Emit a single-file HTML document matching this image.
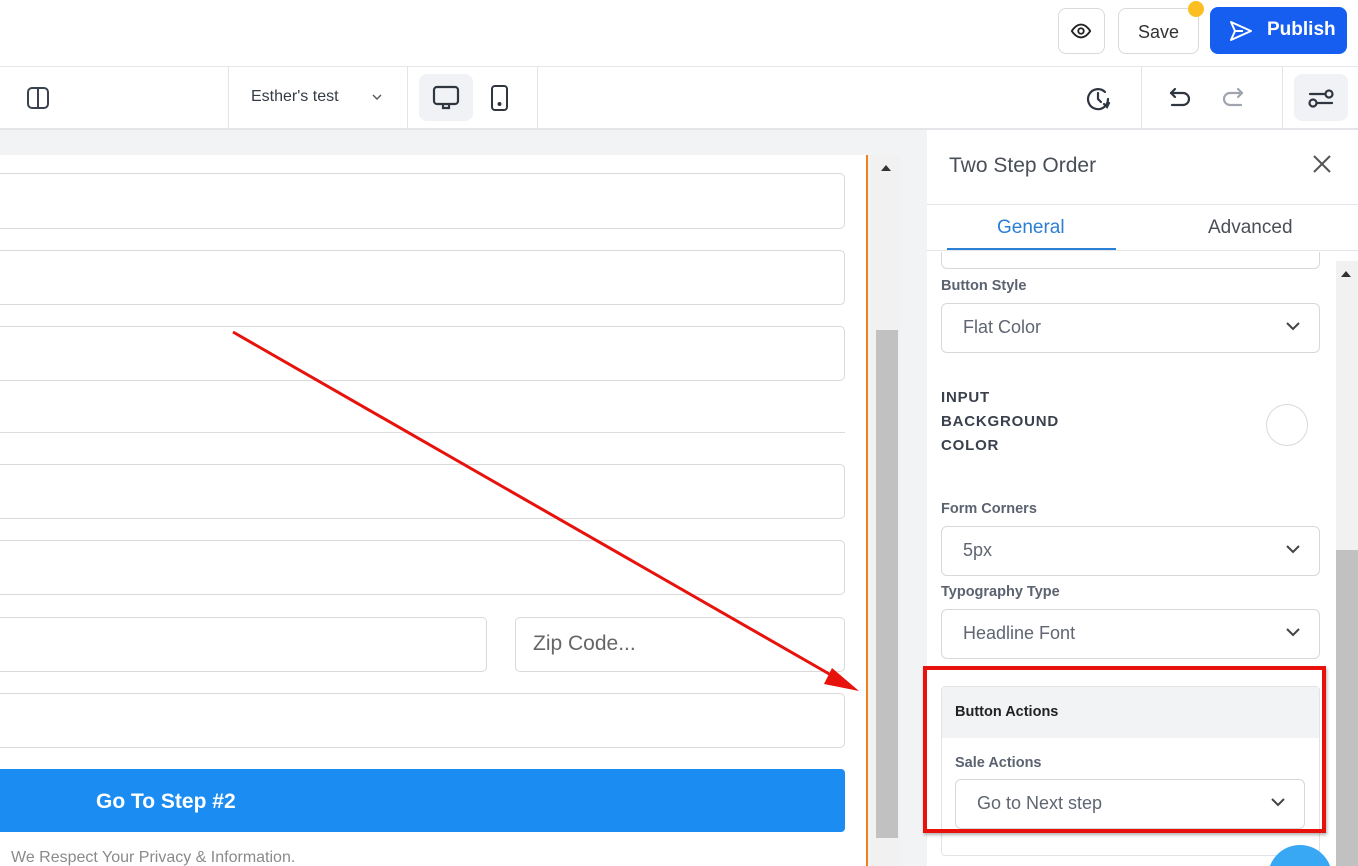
<!DOCTYPE html>
<html style="overflow:hidden;height:866px"><head><meta charset="utf-8"><style>
*{box-sizing:border-box;margin:0;padding:0}
body{width:1358px;height:866px;overflow:hidden;background:#fff;font-family:"Liberation Sans",sans-serif}
#w{position:relative;width:1358px;height:866px;overflow:hidden}
.a{position:absolute}
.inp{position:absolute;left:-10px;width:855px;border:1px solid #d9d9d9;border-radius:5px;background:#fff}
.lbl{position:absolute;left:941px;font-size:14.5px;font-weight:bold;color:#5b6270}
.sel{position:absolute;left:941px;width:379px;height:50px;border:1px solid #d6d8dc;border-radius:6px;background:#fff;font-size:18px;color:#5f6672;padding:13px 0 0 21px}
.chev{position:absolute;right:18px;top:16px}
.vl{position:absolute;top:67px;width:1px;height:61px;background:#e3e5e8}
</style></head><body><div id="w">
<div class="a" style="left:0;top:66px;width:1358px;height:1px;background:#e5e7eb"></div>
<div class="a" style="left:1058px;top:8px;width:47px;height:46px;border:1px solid #d8dadd;border-radius:8px"></div>
<svg class="a" style="left:1070px;top:20px" width="22" height="22" viewBox="0 0 24 24" fill="none" stroke="#222" stroke-width="2"><path d="M2 12s4-7 10-7 10 7 10 7-4 7-10 7S2 12 2 12z"/><circle cx="12" cy="12" r="3"/></svg>
<div class="a" style="left:1118px;top:8px;width:81px;height:46px;border:1px solid #d8dadd;border-radius:8px;font-size:18px;color:#333;text-align:center;line-height:46px">Save</div>
<div class="a" style="left:1188px;top:1px;width:16px;height:16px;border-radius:50%;background:#fbbf24"></div>
<div class="a" style="left:1210px;top:7px;width:137px;height:47px;background:#155eef;border-radius:8px;color:#fff;font-weight:bold;font-size:19px;line-height:46px;padding-left:57px">Publish</div>
<svg class="a" style="left:1228px;top:19px" width="26" height="24" viewBox="0 0 26 24" fill="none" stroke="#fff" stroke-width="2" stroke-linejoin="round"><path d="M3 3l20 9-20 9 4-9z M7 12h8"/></svg>
<div class="a" style="left:0;top:128px;width:1358px;height:2px;background:#e3e5e8"></div>
<div class="vl" style="left:228px"></div><div class="vl" style="left:407px"></div><div class="vl" style="left:537px"></div><div class="vl" style="left:1141px"></div><div class="vl" style="left:1282px"></div>
<svg class="a" style="left:26px;top:86px" width="24" height="24" viewBox="0 0 24 24" fill="none" stroke="#3a4250" stroke-width="2"><rect x="2" y="2" width="20" height="20" rx="4"/><path d="M12 2v20"/></svg>
<div class="a" style="left:251px;top:88px;font-size:16px;color:#353b45">Esther's test</div>
<svg class="a" style="left:371px;top:92px" width="12" height="10" viewBox="0 0 12 10" fill="none" stroke="#555" stroke-width="1.4"><path d="M2 3l4 4 4-4"/></svg>
<div class="a" style="left:419px;top:74px;width:54px;height:47px;background:#f1f2f5;border-radius:8px"></div>
<svg class="a" style="left:432px;top:84px" width="28" height="28" viewBox="0 0 28 28" fill="none" stroke="#2f3640" stroke-width="2.2"><rect x="2" y="3" width="24" height="17" rx="3"/><path d="M11 20v4h6v-4"/></svg>
<svg class="a" style="left:489px;top:84px" width="22" height="28" viewBox="0 0 22 28" fill="none" stroke="#2f3640" stroke-width="2"><rect x="3" y="2" width="15" height="24" rx="3"/><circle cx="10.5" cy="20" r="1" fill="#2f3640"/></svg>
<svg class="a" style="left:1085px;top:85px" width="28" height="28" viewBox="0 0 28 28" fill="none" stroke="#2f3640" stroke-width="2.2" stroke-linecap="round"><path d="M23 14a10 10 0 1 1-3-7"/><path d="M13 8v6l3 3"/><path d="M24 18l-2 4-3-3"/></svg>
<svg class="a" style="left:1167px;top:85px" width="26" height="26" viewBox="0 0 26 26" fill="none" stroke="#2f3640" stroke-width="2.2" stroke-linecap="round" stroke-linejoin="round"><path d="M8 4L4 8l4 4"/><path d="M4 8h12a6 6 0 0 1 0 12H5"/></svg>
<svg class="a" style="left:1220px;top:85px" width="26" height="26" viewBox="0 0 26 26" fill="none" stroke="#a0a5ad" stroke-width="2.2" stroke-linecap="round" stroke-linejoin="round"><path d="M18 4l4 4-4 4"/><path d="M22 8H10a6 6 0 0 0 0 12h11"/></svg>
<div class="a" style="left:1294px;top:74px;width:54px;height:47px;background:#f1f2f5;border-radius:8px"></div>
<svg class="a" style="left:1307px;top:85px" width="28" height="26" viewBox="0 0 28 26" fill="none" stroke="#2f3640" stroke-width="2.2" stroke-linecap="round"><path d="M3 9h15"/><circle cx="22" cy="9" r="3.5"/><path d="M25 18H10"/><circle cx="6" cy="18" r="3.5"/></svg>
<div class="a" style="left:0;top:130px;width:927px;height:736px;background:#f2f3f5"></div>
<div class="a" style="left:0;top:155px;width:866px;height:711px;background:#fff"></div>
<div class="a" style="left:866px;top:155px;width:2px;height:711px;background:#f07f1e"></div>
<div class="a" style="left:870px;top:155px;width:30px;height:711px;background:#f1f1f1"></div>
<div class="a" style="left:876px;top:330px;width:22px;height:508px;background:#c1c1c1"></div>
<svg class="a" style="left:880px;top:164px" width="12" height="8"><path d="M1 7l5-6 5 6z" fill="#333"/></svg>
<div class="inp" style="top:173px;height:56px"></div>
<div class="inp" style="top:250px;height:55px"></div>
<div class="inp" style="top:326px;height:55px"></div>
<div class="a" style="left:0;top:432px;width:845px;height:1px;background:#ddd"></div>
<div class="inp" style="top:464px;height:55px"></div>
<div class="inp" style="top:540px;height:55px"></div>
<div class="inp" style="top:617px;height:55px;width:497px"></div>
<div class="inp" style="top:617px;height:55px;left:515px;width:330px;font-size:21px;color:#666;padding:14px 0 0 17px">Zip Code...</div>
<div class="inp" style="top:693px;height:55px"></div>
<div class="a" style="left:0;top:769px;width:845px;height:63px;background:#1b8cf2;border-radius:0 4px 4px 0;color:#fff;font-weight:bold;font-size:21px;line-height:66px;padding-left:96px">Go To Step #2</div>
<div class="a" style="left:11px;top:849px;font-size:16px;color:#8a8a8a">We Respect Your Privacy &amp; Information.</div>
<svg class="a" style="left:0;top:0" width="900" height="866"><line x1="233" y1="332" x2="838" y2="679" stroke="#e8120c" stroke-width="3"/><path d="M859 691L832 668 824 684z" fill="#e8120c"/></svg>
<div class="a" style="left:927px;top:130px;width:431px;height:736px;background:#fff"></div>
<div class="a" style="left:949px;top:154px;font-size:21px;color:#4a4f57">Two Step Order</div>
<svg class="a" style="left:1313px;top:155px" width="18" height="18" fill="none" stroke="#555" stroke-width="2"><path d="M1 1l16 16M17 1L1 17"/></svg>
<div class="a" style="left:927px;top:204px;width:431px;height:1px;background:#e3e5e8"></div>
<div class="a" style="left:997px;top:217px;font-size:19px;color:#2b7fd4">General</div>
<div class="a" style="left:1208px;top:217px;font-size:19px;color:#4a4f57">Advanced</div>
<div class="a" style="left:927px;top:250px;width:431px;height:1px;background:#e3e5e8"></div>
<div class="a" style="left:947px;top:248px;width:169px;height:2px;background:#2b7fd4"></div>
<div class="a" style="left:1336px;top:261px;width:22px;height:605px;background:#f1f1f1"></div>
<div class="a" style="left:1336px;top:550px;width:22px;height:316px;background:#c1c1c1"></div>
<svg class="a" style="left:1340px;top:270px" width="12" height="8"><path d="M1 7l5-6 5 6z" fill="#333"/></svg>
<div class="a" style="left:941px;top:252px;width:379px;height:17px;border:1px solid #d6d8dc;border-top:none;border-radius:0 0 6px 6px"></div>
<div class="lbl" style="top:278px">Button Style</div>
<div class="sel" style="top:303px">Flat Color<svg class="chev" width="16" height="12" fill="none" stroke="#444" stroke-width="2"><path d="M2 3l6 6 6-6"/></svg></div>
<div class="a" style="left:941px;top:386px;font-size:15px;font-weight:bold;color:#3a414c;line-height:24px;letter-spacing:.8px">INPUT<br>BACKGROUND<br>COLOR</div>
<div class="a" style="left:1266px;top:404px;width:42px;height:42px;border:1px solid #d9d9d9;border-radius:50%"></div>
<div class="lbl" style="top:501px">Form Corners</div>
<div class="sel" style="top:526px">5px<svg class="chev" width="16" height="12" fill="none" stroke="#444" stroke-width="2"><path d="M2 3l6 6 6-6"/></svg></div>
<div class="lbl" style="top:584px">Typography Type</div>
<div class="sel" style="top:609px">Headline Font<svg class="chev" width="16" height="12" fill="none" stroke="#444" stroke-width="2"><path d="M2 3l6 6 6-6"/></svg></div>
<div class="a" style="left:941px;top:686px;width:379px;height:170px;border:1px solid #e1e3e6;border-radius:4px"></div>
<div class="a" style="left:942px;top:687px;width:377px;height:51px;background:#f2f3f5;font-size:14.5px;font-weight:bold;color:#222;padding:17px 0 0 13px">Button Actions</div>
<div class="lbl" style="top:755px;left:955px">Sale Actions</div>
<div class="sel" style="top:779px;left:955px;width:350px">Go to Next step<svg class="chev" width="16" height="12" fill="none" stroke="#444" stroke-width="2"><path d="M2 3l6 6 6-6"/></svg></div>
<div class="a" style="left:923px;top:666px;width:403px;height:167px;border:4px solid #e8120c;box-shadow:1px 2px 3px rgba(0,0,0,.3)"></div>
<div class="a" style="left:1268px;top:845px;width:64px;height:64px;border-radius:50%;background:#38a8f5"></div>
</div></body></html>
